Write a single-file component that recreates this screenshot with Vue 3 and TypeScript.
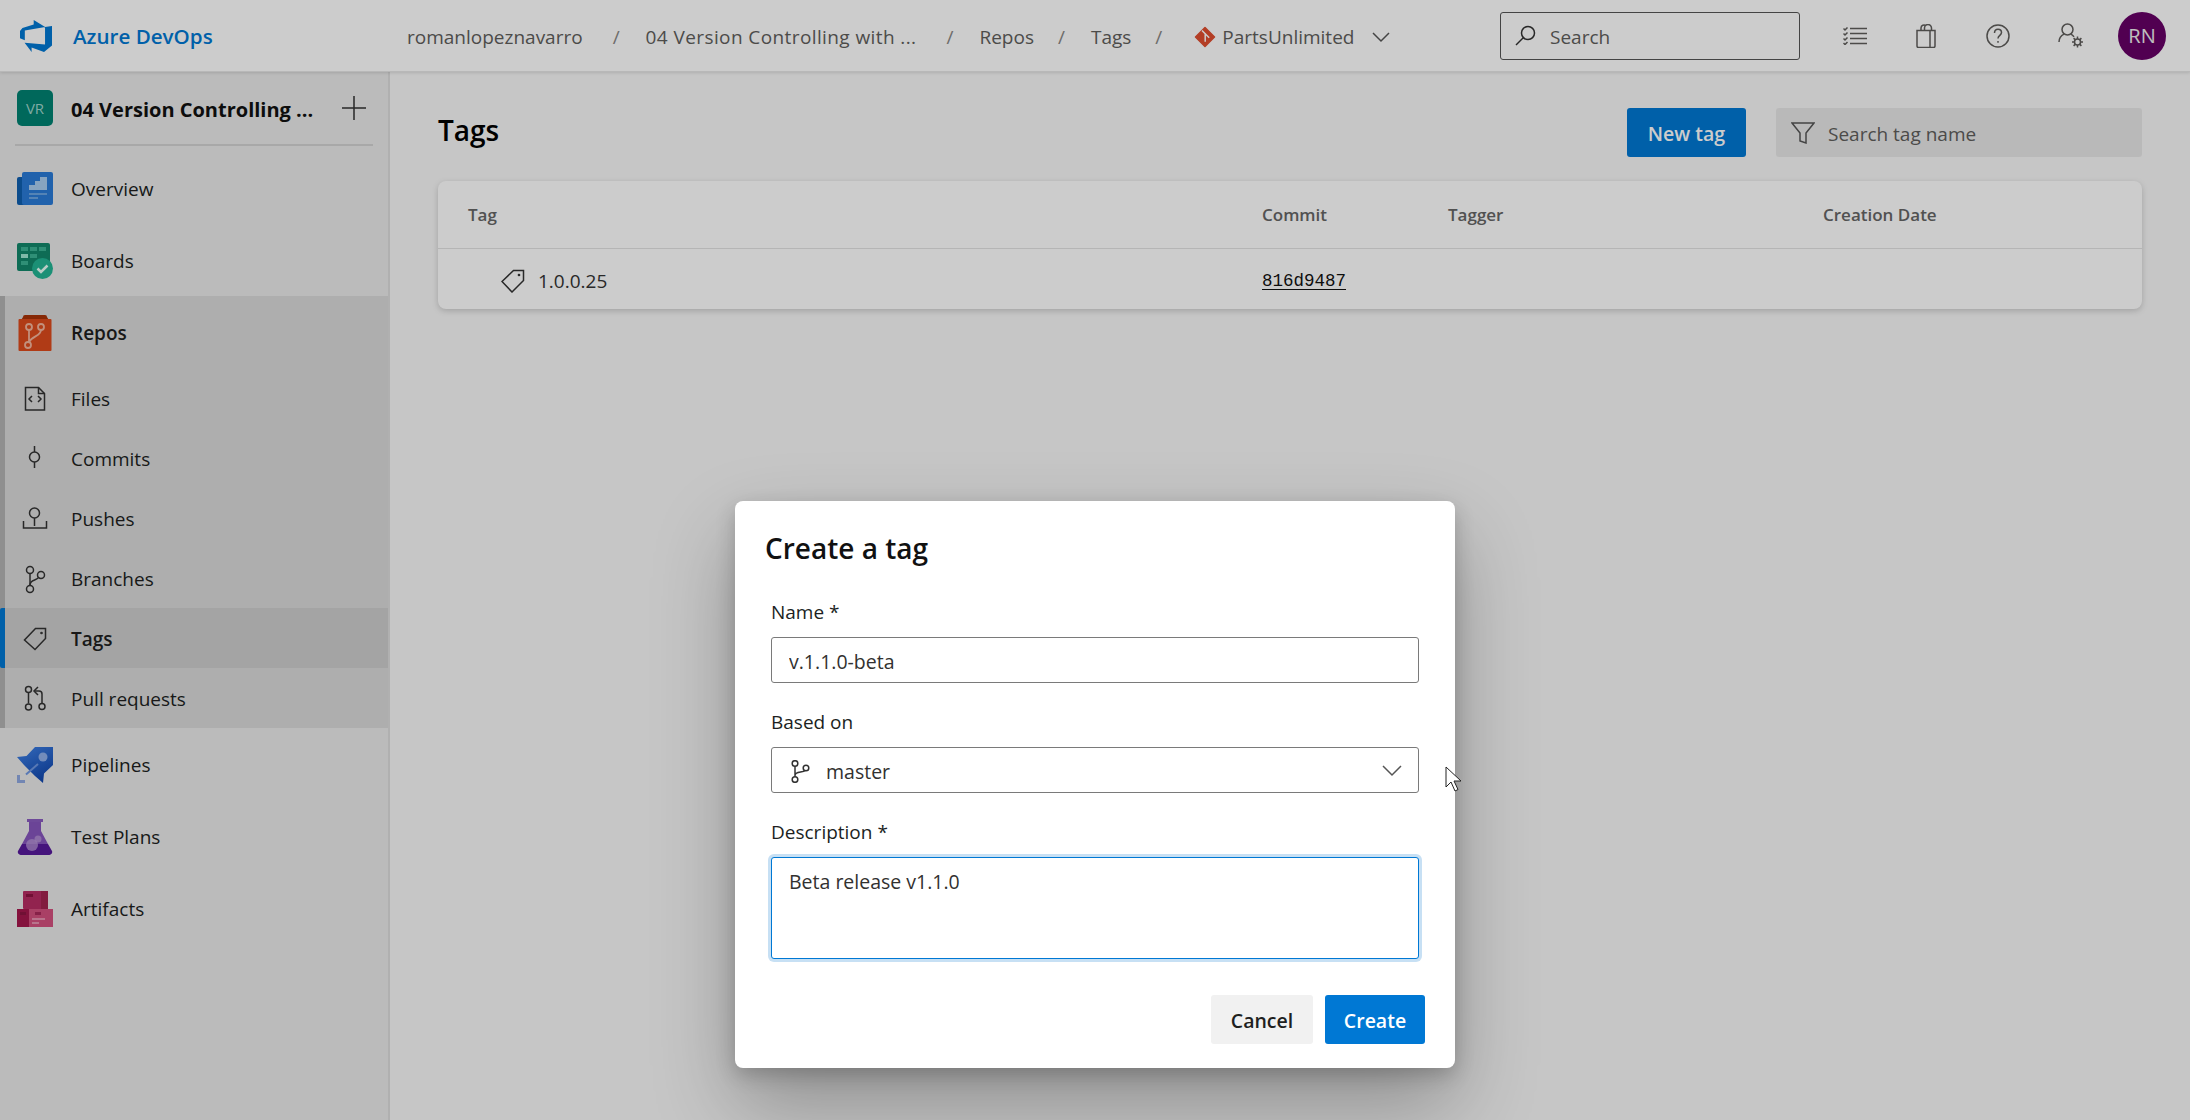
<script setup lang="ts">
import { ref } from 'vue'

interface SubItem {
  label: string
  active?: boolean
  paths: string[]
  dots?: [number, number, number][]
}

const crumbs = ['romanlopeznavarro', '04 Version Controlling with ...', 'Repos', 'Tags']

const subItems: SubItem[] = [
  { label: 'Files', paths: ['M8.5 6.5h13l6 6v16.5h-19z', 'M21.5 6.5v6h6', 'M15 15l-3 3 3 3', 'M21 15l3 3-3 3'] },
  { label: 'Commits', paths: ['M17.5 5v6', 'M17.5 21v6'], dots: [[17.5, 16, 5]] },
  { label: 'Pushes', paths: ['M17.5 17v8', 'M6.5 20v7h23v-7'], dots: [[17.5, 12, 5]] },
  {
    label: 'Branches',
    paths: ['M13 12.5v12', 'M13 24c0-6 7-4 9-8'],
    dots: [[13, 9, 3.5], [24, 14, 3.5], [13, 28, 3.5]]
  },
  { label: 'Tags', active: true, paths: ['M18.5 7.5H28.5V17.5L18 28.5 7.5 19z'], dots: [[24.5, 12, 0.6]] },
  {
    label: 'Pull requests',
    paths: ['M11.5 11.5v11', 'M25 22.5V13c0-2-1-3-3-3h-4', 'M21 6l-4 4 4 4'],
    dots: [[11.5, 8.5, 3], [11.5, 26, 3], [25, 25.5, 3]]
  }
]

const columns = ['Tag', 'Commit', 'Tagger', 'Creation Date']

const tagName = ref('v.1.1.0-beta')
const description = ref('Beta release v1.1.0')
</script>

<template>
  <div class="page">
    <header class="topbar">
      <div class="brand">
        <svg class="brand-logo" viewBox="0 0 18 18"><path fill="#0078d4" d="M17 4v9.74l-4 3.28-6.2-2.26V17L3.29 12.41l10.23.8V4.44zm-3.41.49L7.85 1v2.29L2.23 4.94 1 6.52v3.59l2.41 1.06V6.23z" /></svg>
        <span class="brand-name">Azure DevOps</span>
      </div>
      <nav class="crumbs">
        <template v-for="(c, i) in crumbs" :key="c">
          <span :class="{ 'crumb-long': i === 1 }">{{ c }}</span>
          <span class="slash" :class="{ 'slash-tight': i > 1 }">/</span>
        </template>
        <svg class="git-mark" width="22" height="22" viewBox="0 0 22 22">
          <path fill="#e04e2f" stroke="#e04e2f" stroke-width="1.500" stroke-linejoin="round" d="M11 1.500 20.500 11 11 20.500 1.500 11z" />
          <path fill="none" stroke="#fff" stroke-width="1.500" d="M8 4.500l3.200 3.200v8M11.200 7.700l4 4" />
        </svg>
        <span class="repo-name">PartsUnlimited</span>
        <svg class="chev" width="20" height="20" viewBox="0 0 20 20"><path d="M2 6l8 8 8-8" /></svg>
      </nav>
      <div class="top-right">
        <div class="top-search">
          <svg width="21" height="21" viewBox="0 0 21 21" class="line-icon"><circle cx="13" cy="8" r="6.500" /><path d="M8.500 12.500 1 20" /></svg>
          <span>Search</span>
        </div>
        <button class="top-btn" aria-label="Work items">
          <svg width="24" height="18" viewBox="0 0 24 18" class="line-icon">
            <path d="M7 1.500h17M7 6.500h17M7 11.500h17M7 16.500h17" />
            <path d="M.5 1.500l1.500 1.500 2.500-2.500M.5 6.500l1.500 1.500 2.500-2.500M.5 11.500l1.500 1.500 2.500-2.500M.5 16l1.500 1.500 2.500-2.500" />
          </svg>
        </button>
        <button class="top-btn bag" aria-label="Marketplace">
          <svg width="20" height="24" viewBox="0 0 20 24" class="line-icon">
            <path d="M1 6.500h18v15.500a1.500 1.500 0 0 1-1.500 1.500h-15a1.500 1.500 0 0 1-1.500-1.500z" />
            <path d="M5 6.500V4a3 3 0 0 1 5-2.200" /><path d="M8.500 6.500V4a3.500 3.500 0 0 1 7 0v2.500" /><path d="M14 6.500v17" />
          </svg>
        </button>
        <button class="top-btn help" aria-label="Help">
          <svg width="24" height="24" viewBox="0 0 24 24" class="line-icon">
            <circle cx="12" cy="12" r="11" />
            <path d="M8.500 9c0-2.500 1.700-3.800 3.500-3.800s3.500 1.300 3.500 3.300c0 2.700-3.500 3-3.500 6" />
            <path d="M12 17v1.800" />
          </svg>
        </button>
        <button class="top-btn" aria-label="User settings">
          <svg width="26" height="25" viewBox="0 0 26 25" class="line-icon">
            <circle cx="9.500" cy="6.500" r="5.500" />
            <path d="M1 19c0-4.500 2.500-6.500 5-7.800" /><path d="M13 11.200c1.200.7 2.300 1.500 3 2.600" />
            <circle cx="19.500" cy="19" r="3" />
            <path d="M19.500 13.500v2.500M19.500 22v2.500M14 19h2.500M22.500 19H25M15.600 15.100l1.800 1.800M21.600 21.100l1.800 1.800M23.400 15.100 21.600 16.900M17.400 21.100l-1.800 1.800" />
          </svg>
        </button>
        <div class="avatar">RN</div>
      </div>
    </header>

    <aside class="sidebar">
      <div class="project">
        <div class="project-tile">VR</div>
        <span class="project-name">04 Version Controlling ...</span>
        <svg class="plus" width="24" height="24" viewBox="0 0 24 24"><path d="M0 12h24M12 0v24" /></svg>
      </div>
      <div class="divider"></div>

      <a class="nav-item">
        <svg class="nav-icon" viewBox="0 0 36 36">
          <rect x="0" y="6" width="10" height="28" rx="2" fill="#0f5fb0" />
          <rect x="5" y="1" width="31" height="33" rx="2" fill="#2a7bd8" />
          <path fill="#a9cdf0" d="M12 14h6V10h5V6h7v13H12z" />
          <path stroke="#7fb2e6" stroke-width="1.500" d="M12 23h18M12 27h9" />
        </svg>
        <span>Overview</span>
      </a>
      <a class="nav-item">
        <svg class="nav-icon" viewBox="0 0 36 36">
          <rect x="0" y="0" width="33" height="28" rx="2" fill="#12876b" />
          <path fill="#3bb394" d="M4 4h7v4H4zM13 4h7v4h-7zM22 4h7v4h-7zM13 11h7v4h-7zM4 18h7v4H4z" />
          <path fill="#9fe8d3" d="M4 11h7v4H4z" />
          <circle cx="25.500" cy="25.500" r="10.500" fill="#22b594" />
          <path fill="none" stroke="#e8fff8" stroke-width="2.500" d="M20.500 25.500l3.500 3.500 6.500-6.500" />
        </svg>
        <span>Boards</span>
      </a>

      <div class="repos-group">
        <a class="nav-item nav-item-strong">
          <svg class="nav-icon" viewBox="0 0 36 36">
            <path fill="#a83208" d="M6 2a2 2 0 0 1 2-2h20a2 2 0 0 1 2 2l3 5H3z" />
            <rect x="1.500" y="4" width="33" height="32" rx="1" fill="#dc4a1c" />
            <g fill="none" stroke="#f3b49c" stroke-width="1.800">
              <circle cx="12" cy="12" r="3" /><circle cx="24" cy="12" r="3" /><circle cx="11" cy="30" r="3" />
              <path d="M12 15v12M24 15c0 6-9 6-12 12" />
            </g>
          </svg>
          <span>Repos</span>
        </a>
        <a v-for="item in subItems" :key="item.label" class="sub-item" :class="{ active: item.active }">
          <svg class="nav-icon line-icon" viewBox="0 0 36 36">
            <path v-for="d in item.paths" :key="d" :d="d" />
            <circle v-for="c in item.dots" :key="c.join()" :cx="c[0]" :cy="c[1]" :r="c[2]" />
          </svg>
          <span>{{ item.label }}</span>
        </a>
      </div>

      <a class="nav-item">
        <svg class="nav-icon" viewBox="0 0 36 36">
          <defs>
            <linearGradient id="rocket" x1="0.2" y1="0.1" x2="0.7" y2="1">
              <stop offset="0" stop-color="#3a7be0" />
              <stop offset="1" stop-color="#0f45ac" />
            </linearGradient>
          </defs>
          <path fill="url(#rocket)" d="M18 0H36V18L27 26.500 26 36 18 29 7 18 0 10 9.500 9z" />
          <circle cx="26" cy="10" r="4.500" fill="#8fb0ea" />
          <path stroke="#6f97e2" stroke-width="2" d="M9 27.500 21 17" />
          <path fill="#8fa8e0" d="M0 28h3v5h5v3H0z" />
        </svg>
        <span>Pipelines</span>
      </a>
      <a class="nav-item">
        <svg class="nav-icon" viewBox="0 0 36 36">
          <rect x="10" y="0" width="16" height="3" fill="#8a5cc0" />
          <path fill="#8656bd" d="M12 3h12v9l7 13H5l7-13z" />
          <path fill="#571a9c" d="M5 25h26l4 7a3 3 0 0 1-3 4H4a3 3 0 0 1-3-4z" />
          <circle cx="15" cy="26" r="6" fill="#b99ad8" opacity=".75" />
          <circle cx="21" cy="20" r="3.500" fill="#b99ad8" opacity=".75" />
        </svg>
        <span>Test Plans</span>
      </a>
      <a class="nav-item">
        <svg class="nav-icon" viewBox="0 0 36 36">
          <rect x="6" y="0" width="25" height="18" rx="1" fill="#b72c63" />
          <rect x="24" y="0" width="7" height="18" fill="#a3234f" />
          <rect x="0" y="18" width="13" height="18" fill="#a5174d" />
          <rect x="12" y="18" width="24" height="18" fill="#d4517f" />
          <path fill="#8c1541" d="M9 3h7v3H9zM3 21h6v3H3z" />
          <path fill="#a82a5b" d="M18 21h6v3h-6z" />
          <path stroke="#eda6c0" stroke-width="1.300" d="M15 28h13M15 32h7" />
        </svg>
        <span>Artifacts</span>
      </a>
    </aside>

    <main class="content">
      <div class="content-head">
        <h1>Tags</h1>
        <button class="btn btn-primary new-tag">New tag</button>
        <div class="tag-filter">
          <svg width="24" height="22" viewBox="0 0 24 22" class="line-icon"><path d="M1 1h22L15 11v10l-6-2V11z" /></svg>
          <span>Search tag name</span>
        </div>
      </div>
      <section class="card">
        <div class="card-head">
          <span v-for="col in columns" :key="col">{{ col }}</span>
        </div>
        <div class="card-row">
          <div class="tag-cell">
            <svg width="24" height="24" viewBox="0 0 24 24" class="line-icon"><path d="M12.500 1.500H22.500V11.500L11 23 1 12.500z" /><circle cx="18" cy="6" r=".6" /></svg>
            <span>1.0.0.25</span>
          </div>
          <a class="commit">816d9487</a>
        </div>
      </section>
    </main>

    <div class="overlay"></div>

    <form class="dialog" @submit.prevent>
      <h2>Create a tag</h2>
      <label class="field-label">Name *</label>
      <input v-model="tagName" class="field" type="text" />
      <label class="field-label">Based on</label>
      <div class="field select">
        <svg width="19" height="23" viewBox="0 0 19 23" class="line-icon">
          <circle cx="4" cy="3.500" r="2.800" /><circle cx="15" cy="8" r="2.800" /><circle cx="4" cy="19.500" r="2.800" />
          <path d="M4 6.300v10.400M4 15.500c0-4.500 8-2.500 10.200-5" />
        </svg>
        <span>master</span>
        <svg class="chev select-chev" width="20" height="20" viewBox="0 0 20 20"><path d="M1 5l9 9 9-9" /></svg>
      </div>
      <label class="field-label">Description *</label>
      <textarea v-model="description" class="field area"></textarea>
      <div class="dialog-actions">
        <button class="btn btn-light" type="button">Cancel</button>
        <button class="btn btn-create" type="submit">Create</button>
      </div>
    </form>

    <svg class="cursor" width="20" height="28" viewBox="0 0 20 28">
      <path fill="#fff" stroke="#222" stroke-width="1" d="M1 1v20l5-5 4 9 3-1.500-4-8.500h7z" />
    </svg>
  </div>
</template>

<style scoped>
.page {
  position: relative;
  display: grid;
  grid-template-columns: 390px 1fr;
  grid-template-rows: 72px 1fr;
  width: 2190px;
  height: 1120px;
  overflow: hidden;
  background: #f8f8f8;
  color: #201f1e;
  font-family: 'Open Sans', 'Liberation Sans', sans-serif;
  font-size: 19px;
}

button {
  border: none;
  background: none;
  font-family: inherit;
  padding: 0;
}

.line-icon {
  fill: none;
  stroke: #333;
  stroke-width: 1.5;
  flex: none;
}

.topbar {
  grid-column: 1 / -1;
  display: flex;
  align-items: center;
  background: #fff;
  border-bottom: 1px solid #e6e6e6;
  box-shadow: 0 1px 3px rgba(0, 0, 0, 0.12);
  z-index: 1;
}

.brand {
  flex: 0 0 407px;
  display: flex;
  align-items: center;
  gap: 19px;
  padding-left: 18px;
  box-sizing: border-box;
}

.brand-logo {
  width: 36px;
  height: 36px;
}

.brand-name {
  color: #0078d4;
  font-weight: 600;
  font-size: 20.600px;
}

.crumbs {
  display: flex;
  align-items: center;
  gap: 26px;
  color: #605e5c;
  padding-top: 2px;
}

.crumb-long {
  letter-spacing: 0.4px;
}

.slash {
  color: #8a8886;
  margin-left: 4px;
}

.slash-tight {
  margin-left: -2px;
}

.git-mark {
  margin-left: 6px;
  margin-right: -20px;
}

.chev {
  fill: none;
  stroke: #555;
  stroke-width: 1.5;
  margin-left: -9px;
}

.top-right {
  margin-left: auto;
  display: flex;
  align-items: center;
  padding-right: 24px;
}

.top-search {
  display: flex;
  align-items: center;
  gap: 14px;
  width: 300px;
  height: 48px;
  box-sizing: border-box;
  padding-left: 14px;
  margin-right: 19px;
  border: 1.5px solid #555;
  border-radius: 3px;
  color: #605e5c;
}

.top-search span {
  padding-top: 2px;
}

.top-btn {
  width: 72px;
  display: flex;
  justify-content: center;
}

.top-btn .line-icon {
  stroke: #605e5c;
}

.bag {
  padding-right: 3px;
}

.help {
  padding-right: 2px;
}

.avatar {
  width: 48px;
  height: 48px;
  margin-left: 11px;
  border-radius: 50%;
  background: #660066;
  color: #eee;
  display: flex;
  align-items: center;
  justify-content: center;
  font-size: 20px;
}

.sidebar {
  background: #eaeaea;
  border-right: 2px solid #dcdcdc;
  box-sizing: border-box;
}

.project {
  height: 72px;
  display: flex;
  align-items: center;
  padding-left: 17px;
}

.project-tile {
  width: 36px;
  height: 36px;
  border-radius: 5px;
  background: #008272;
  color: #9fd6cc;
  font-size: 15px;
  display: flex;
  align-items: center;
  justify-content: center;
}

.project-name {
  margin-left: 18px;
  width: 271px;
  padding-top: 2px;
  font-size: 20px;
  font-weight: 700;
  white-space: nowrap;
  color: #111;
}

.plus {
  fill: none;
  stroke: #333;
  stroke-width: 1.5;
}

.divider {
  height: 2px;
  margin: 0 15px 6px;
  background: #d2d2d2;
}

.nav-item {
  height: 72px;
  box-sizing: border-box;
  padding-top: 2px;
  display: flex;
  align-items: center;
  gap: 18px;
  padding-left: 17px;
}

.nav-icon {
  width: 36px;
  height: 36px;
  flex: none;
}

.nav-item-strong {
  font-weight: 600;
}

.repos-group {
  background: #dadada;
  border-left: 5px solid #b3b3b3;
}

.repos-group .nav-item,
.repos-group .sub-item {
  padding-left: 12px;
}

.sub-item {
  height: 60px;
  box-sizing: border-box;
  padding-top: 2px;
  display: flex;
  align-items: center;
  gap: 18px;
  position: relative;
}

.sub-item.active {
  background: #cecece;
  font-weight: 600;
}

.sub-item.active::before {
  content: '';
  position: absolute;
  left: -5px;
  top: 0;
  bottom: 0;
  width: 5px;
  background: #0078d4;
  border-radius: 2px 0 0 2px;
}

.content {
  padding: 36px 48px 0;
}

.content-head {
  display: flex;
  align-items: center;
  height: 49px;
}

h1 {
  margin: 0 0 5px;
  font-size: 28px;
  font-weight: 600;
  color: #000;
}

.btn {
  height: 49px;
  padding-top: 2px;
  border-radius: 3px;
  font-size: 19.500px;
  font-weight: 600;
}

.btn-primary {
  background: #0078d4;
  color: #fff;
}

.new-tag {
  margin-left: auto;
  width: 119px;
}

.tag-filter {
  margin-left: 30px;
  width: 366px;
  height: 49px;
  box-sizing: border-box;
  padding-left: 15px;
  display: flex;
  align-items: center;
  gap: 13px;
  border-radius: 3px;
  background: #e8e8e8;
  color: #605e5c;
}

.tag-filter span {
  padding-top: 2px;
}

.tag-filter .line-icon {
  stroke: #555;
}

.card {
  margin-top: 24px;
  background: #fff;
  border-radius: 8px;
  box-shadow: 0 2px 6px rgba(0, 0, 0, 0.18);
}

.card-head,
.card-row {
  display: grid;
  grid-template-columns: 794px 186px 375px 1fr;
  align-items: center;
  padding-left: 30px;
}

.card-head {
  height: 67px;
  border-bottom: 1px solid #e3e3e3;
  font-size: 17px;
  font-weight: 600;
  color: #666;
}

.card-row {
  height: 60px;
  box-sizing: border-box;
  padding-top: 3px;
}

.tag-cell {
  display: flex;
  align-items: center;
  gap: 13px;
  padding-left: 33px;
  color: #333;
}

.commit {
  font-family: 'Liberation Mono', monospace;
  font-size: 17.500px;
  text-decoration: underline;
  text-underline-offset: 3px;
  color: #111;
}

.overlay {
  position: absolute;
  inset: 0;
  background: rgba(0, 0, 0, 0.2);
  z-index: 2;
}

.dialog {
  position: absolute;
  left: 735px;
  top: 501px;
  z-index: 3;
  width: 720px;
  height: 567px;
  box-sizing: border-box;
  padding: 27px 36px 0;
  background: #fff;
  border-radius: 8px;
  box-shadow: 0 37px 82px rgba(0, 0, 0, 0.28), 0 7px 20px rgba(0, 0, 0, 0.2);
}

h2 {
  margin: 0 0 30px -6px;
  font-size: 28px;
  line-height: 40px;
  font-weight: 600;
  color: #111;
}

.field-label {
  display: block;
  line-height: 28px;
  margin-bottom: 11px;
}

.field {
  display: block;
  width: 100%;
  height: 46px;
  box-sizing: border-box;
  margin-bottom: 25px;
  border: 1.500px solid #7a7a7a;
  border-radius: 3px;
  padding: 2px 17px 0;
  font-family: inherit;
  font-size: 19.500px;
  color: #323130;
  outline: none;
}

.select {
  display: flex;
  align-items: center;
  gap: 16px;
  padding-left: 19px;
}

.select-chev {
  margin-left: auto;
  margin-right: -1px;
}

.area {
  height: 102px;
  margin-bottom: 36px;
  padding-top: 10px;
  resize: none;
  border-color: #0078d4;
  box-shadow: 0 0 0 3px #c7e0f4;
}

.dialog-actions {
  display: flex;
  justify-content: flex-end;
  gap: 12px;
  margin-right: -6px;
}

.btn-light {
  width: 102px;
  background: #f1f1f1;
  color: #201f1e;
}

.btn-create {
  width: 100px;
  background: #0078d4;
  color: #fff;
}

.cursor {
  position: absolute;
  left: 1445px;
  top: 766px;
  z-index: 4;
}
</style>

<style>
body {
  margin: 0;
}
</style>
